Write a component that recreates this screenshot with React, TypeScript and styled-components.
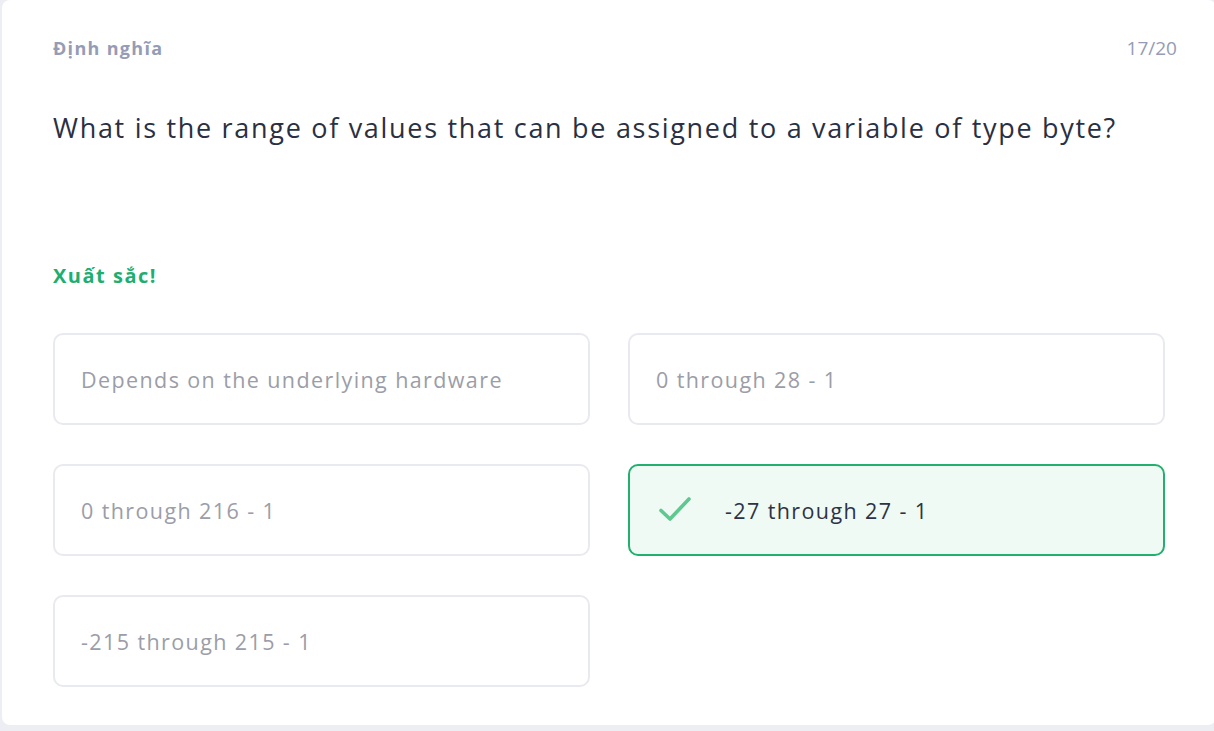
import React from "react";
import styled, { createGlobalStyle } from "styled-components";

const Global = createGlobalStyle`
  html, body { margin: 0; padding: 0; background: #edeef3; }
  body { font-family: "Open Sans", "Lato", sans-serif; }
  * { box-sizing: border-box; }
`;

const Page = styled.div`
  width: 1214px;
  height: 731px;
  padding: 0 0 6px 2px;
  overflow: hidden;
`;

const Card = styled.div`
  background: #ffffff;
  border-radius: 8px;
  width: 1214px;
  height: 725px;
  padding: 35px 50px 0 51px;
  display: flex;
  flex-direction: column;
`;

const Header = styled.div`
  display: flex;
  justify-content: space-between;
  align-items: center;
  height: 26px;
`;

const Label = styled.span`
  font-size: 18px;
  font-weight: 700;
  color: #959cb5;
  letter-spacing: 1.3px;
`;

const Counter = styled.span`
  font-size: 19px;
  color: #959cb5;
  margin-right: -11px;
`;

const Question = styled.h1`
  margin: 47px 0 0;
  font-size: 27px;
  font-weight: 400;
  color: #2a3042;
  line-height: 40px;
  letter-spacing: 1.7px;
`;

const Feedback = styled.div`
  margin-top: 114px;
  font-size: 20px;
  font-weight: 700;
  color: #1eae70;
  height: 28px;
  line-height: 28px;
  letter-spacing: 1.5px;
`;

const Grid = styled.div`
  margin-top: 43px;
  display: grid;
  grid-template-columns: 537px 537px;
  column-gap: 38px;
  row-gap: 39px;
`;

const Option = styled.div<{ $correct?: boolean }>`
  height: 92px;
  border-radius: 10px;
  border: 2px solid ${(p) => (p.$correct ? "#22b06e" : "#e9eaef")};
  background: ${(p) => (p.$correct ? "#f0faf5" : "#ffffff")};
  display: flex;
  align-items: center;
  padding-left: ${(p) => (p.$correct ? "28px" : "26px")};
  font-size: 21.5px;
  color: ${(p) => (p.$correct ? "#2d3244" : "#9b9da8")};
  letter-spacing: 1.4px;
`;

const Check = styled.svg`
  width: 36px;
  height: 36px;
  margin-right: 31px;
  flex: none;
`;

const options: { text: string; correct?: boolean }[] = [
  { text: "Depends on the underlying hardware" },
  { text: "0 through 28 - 1" },
  { text: "0 through 216 - 1" },
  { text: "-27 through 27 - 1", correct: true },
  { text: "-215 through 215 - 1" },
];

export default function App() {
  return (
    <>
      <Global />
      <Page>
        <Card>
          <Header>
            <Label>Định nghĩa</Label>
            <Counter>17/20</Counter>
          </Header>
          <Question>
            What is the range of values that can be assigned to a variable of type byte?
          </Question>
          <Feedback>Xuất sắc!</Feedback>
          <Grid>
            {options.map((o) => (
              <Option key={o.text} $correct={o.correct}>
                {o.correct && (
                  <Check viewBox="0 0 36 36" fill="none">
                    <path
                      d="M3 18.5 L12 27 L31 7"
                      stroke="#5dc88f"
                      strokeWidth="3.6"
                      strokeLinecap="round"
                      strokeLinejoin="round"
                    />
                  </Check>
                )}
                {o.text}
              </Option>
            ))}
          </Grid>
        </Card>
      </Page>
    </>
  );
}
